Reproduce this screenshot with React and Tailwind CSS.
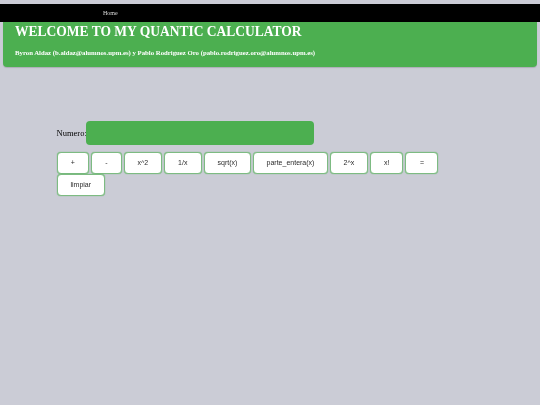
const ops = [
  { label: "+", width: "w-[32.4px]" },
  { label: "-", width: "w-[30.4px]" },
  { label: "x^2", width: "w-[38px]" },
  { label: "1/x", width: "w-[37.6px]" },
  { label: "sqrt(x)", width: "w-[47.4px]" },
  { label: "parte_entera(x)", width: "w-[74.4px]" },
  { label: "2^x", width: "w-[38px]" },
  { label: "x!", width: "w-[33.2px]" },
  { label: "=", width: "w-[33px]" },
  { label: "limpiar", width: "w-[48.4px]" },
];

function App() {
  return (
    <div className="h-[405px] w-[540px] overflow-hidden bg-[#cbccd6] pt-[4px] font-['Liberation_Serif',serif] will-change-transform">
      {/* Nav */}
      <div className="flex h-[18px] items-center bg-black pl-[103px] text-[6px] text-[#dddddd]">
        Home
      </div>

      {/* Header */}
      <div className="mx-[3px] h-[45px] rounded-b-[4px] bg-[#4caf50] pl-[12px] text-white shadow-[0_1px_1px_rgba(0,0,0,0.15)]">
        <h1 className="origin-left scale-x-[0.9] whitespace-nowrap text-[15px] font-bold leading-[19px]">WELCOME TO MY QUANTIC CALCULATOR</h1>
        <p className="mt-[8px] text-[6.75px] font-bold leading-[8px]">
          Byron Aldaz (b.aldaz@alumnos.upm.es) y Pablo Rodriguez Oro (pablo.rodriguez.oro@alumnos.upm.es)
        </p>
      </div>

      {/* Calculator */}
      <div className="ml-[56.6px] mt-[54px] w-[384px]">
        <div className="flex items-center">
          <label className="w-[29.7px] text-[8.5px] text-black">Numero:</label>
          <div className="h-[24px] w-[227.7px] rounded-[4px] bg-[#4caf50]"></div>
        </div>
        <div className="mt-[7px] flex flex-wrap gap-x-[2.2px]">
          {ops.map(op => (
            <button
              key={op.label}
              className={`h-[22px] ${op.width} rounded-[4px] border border-[#7dbb82] bg-white font-['Liberation_Sans',sans-serif] text-[7px] text-[#2b2b2b] shadow-[0_0_1px_#4caf50]`}
            >
              {op.label}
            </button>
          ))}
        </div>
      </div>
    </div>
  );
}

export default App;
